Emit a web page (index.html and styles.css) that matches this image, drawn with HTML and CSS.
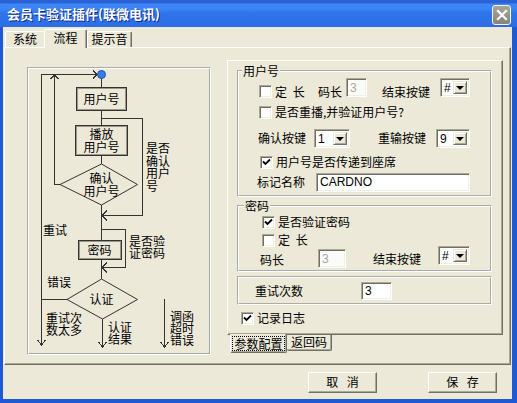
FILE: index.html
```html
<!DOCTYPE html>
<html lang="zh-CN">
<head>
<meta charset="utf-8">
<title>会员卡验证插件</title>
<link rel="stylesheet" href="styles.css">
</head>
<body>
<div class="window">
  <div class="titlebar">
    <span class="title">会员卡验证插件(联微电讯)</span>
    <span class="close"><svg width="12" height="12" viewBox="0 0 12 12"><path d="M2 2 L10 10 M10 2 L2 10" stroke="#fff" stroke-width="2.2" stroke-linecap="square"/></svg></span>
  </div>
  <div class="client">
    <div class="tabs">
      <div class="tab t-sys">系统</div>
      <div class="tab t-flow active">流程</div>
      <div class="tab t-tone">提示音</div>
    </div>
    <div class="page">
      <div class="flow">
        <svg width="180" height="284" viewBox="2 2 180 284">
          <g class="lines">
            <path d="M14.5 278 V7.5 H70"/>
            <path d="M66 3.5 L70 7.5 L66 11.5"/>
            <path d="M27.5 8 V117.5 H33"/>
            <path d="M23.5 12 L27.5 8 L31.5 12"/>
            <path d="M74.5 11 V20"/>
            <rect x="49.5" y="20.5" width="50" height="23"/>
            <rect x="50.5" y="21.5" width="48" height="21" class="inner"/>
            <path d="M74.5 43 V58"/>
            <path d="M74.5 51.5 H115.5 V148.5 H75"/>
            <path d="M80 143.5 L75 148.5 L80 153.5"/>
            <rect x="48.5" y="58.5" width="52" height="30"/>
            <rect x="49.5" y="59.5" width="50" height="28" class="inner"/>
            <path d="M74.5 88 V97"/>
            <polygon points="74.5,97 110.5,117.5 74.5,138 33,117.5"/>
            <path d="M74.5 138 V173"/>
            <path d="M74.5 162.5 H98.5 V200.5 H75"/>
            <path d="M80 195.5 L75 200.5 L80 205.5"/>
            <rect x="51.5" y="173.5" width="43" height="19"/>
            <rect x="52.5" y="174.5" width="41" height="17" class="inner"/>
            <path d="M74.5 192 V212"/>
            <polygon points="74.5,212 110.5,232.5 75.5,252 40,232.5"/>
            <path d="M14.5 232.5 H40"/>
            <path d="M10.5 273 L14.5 278 L18.5 273"/>
            <path d="M75.5 252 V280"/>
            <path d="M71.5 275 L75.5 280 L79.5 275"/>
            <path d="M137.5 232 V280"/>
            <path d="M133.5 275 L137.5 280 L141.5 275"/>
          </g>
          <circle cx="74.5" cy="7.5" r="4" class="dot"/>
        </svg>
        <div class="node n-user">用户号</div>
        <div class="node n-play">播放
用户号</div>
        <div class="node n-confirm">确认
用户号</div>
        <div class="node n-pwd">密码</div>
        <div class="node n-auth">认证</div>
        <div class="note q-confirm">是否确认用户号</div>
        <div class="note q-pwd">是否验证密码</div>
        <div class="note l-retry">重试</div>
        <div class="note l-err">错误</div>
        <div class="note l-many">重试次数太多</div>
        <div class="note l-result">认证结果</div>
        <div class="note l-timeout">调函超时错误</div>
      </div>
      <div class="config">
        <div class="panel">
          <fieldset class="group g-user">
            <legend>用户号</legend>
            <div class="row r1">
              <span class="chk low"></span>
              <span class="lbl w-fix low">定 长</span>
              <span class="lbl w28 low">码长</span>
              <span class="edit disabled w21">3</span>
              <span class="lbl ml15 w58 low">结束按键</span>
              <span class="combo w30"><span class="v">#</span><span class="dd"></span></span>
            </div>
            <div class="row r2">
              <span class="chk"></span>
              <span class="lbl ml3">是否重播,并验证用户号?</span>
            </div>
            <div class="row r3">
              <span class="lbl ml19 w56">确认按键</span>
              <span class="combo w36"><span class="v">1</span><span class="dd"></span></span>
              <span class="lbl ml28 w58">重输按键</span>
              <span class="combo w34"><span class="v">9</span><span class="dd"></span></span>
            </div>
            <div class="row r4">
              <span class="chk on ml21"><svg width="9" height="9" viewBox="0 0 9 9"><path d="M1 3.5 L3.5 6 L8 1.5" class="tick"/></svg></span>
              <span class="lbl ml3">用户号是否传递到座席</span>
            </div>
            <div class="row r5">
              <span class="lbl ml18 w59">标记名称</span>
              <span class="edit w154">CARDNO</span>
            </div>
          </fieldset>
          <fieldset class="group g-pwd">
            <legend>密码</legend>
            <div class="row p1">
              <span class="chk on ml23"><svg width="9" height="9" viewBox="0 0 9 9"><path d="M1 3.5 L3.5 6 L8 1.5" class="tick"/></svg></span>
              <span class="lbl ml3">是否验证密码</span>
            </div>
            <div class="row p2">
              <span class="chk ml23"></span>
              <span class="lbl ml3 spaced">定 长</span>
            </div>
            <div class="row p3">
              <span class="lbl ml21 w58 drop">码长</span>
              <span class="edit disabled w28">3</span>
              <span class="lbl ml27 w65">结束按键</span>
              <span class="combo w32 lift"><span class="v">#</span><span class="dd"></span></span>
            </div>
          </fieldset>
          <fieldset class="group g-retry">
            <div class="row q1">
              <span class="lbl ml16 w106">重试次数</span>
              <span class="edit w31 short">3</span>
            </div>
          </fieldset>
          <div class="row logrow">
            <span class="chk on ml4"><svg width="9" height="9" viewBox="0 0 9 9"><path d="M1 3.5 L3.5 6 L8 1.5" class="tick"/></svg></span>
            <span class="lbl ml3">记录日志</span>
          </div>
        </div>
        <div class="btabs">
          <div class="btab active"><span class="focus">参数配置</span></div>
          <div class="btab">返回码</div>
        </div>
      </div>
    </div>
    <div class="buttons">
      <button class="btn">取 消</button>
      <button class="btn">保 存</button>
    </div>
  </div>
</div>
</body>
</html>
```

FILE: styles.css
```css
* { box-sizing: border-box; }
html, body { margin: 0; padding: 0; }
body {
  width: 517px;
  height: 403px;
  overflow: hidden;
  background: #fff;
  color: #000;
  font: 12px/14px "Liberation Sans", "Noto Sans CJK SC", sans-serif;
}

.window {
  width: 517px;
  height: 403px;
  display: flex;
  flex-direction: column;
  background: #1f5ad6;
}

.titlebar {
  height: 27px;
  flex: none;
  display: flex;
  align-items: center;
  justify-content: space-between;
  padding: 0 6px 0 7px;
  background: linear-gradient(to bottom, #2a62d6 0, #2a62d6 3px, #3c86f6 4px, #3a84f5 9px, #2f74ea 13px, #2b6de6 27px);
}
.title {
  color: #fff;
  font-family: "Noto Sans CJK SC", sans-serif;
  font-weight: bold;
  font-size: 13px;
  line-height: 16px;
  text-shadow: 1px 1px #0b2a8a;
  margin-top: 1px;
}
.close {
  width: 19px;
  height: 20px;
  border: 1px solid #f4f4f0;
  border-radius: 3px;
  background: linear-gradient(to bottom, #a7a59c, #86847b);
  display: flex;
  align-items: center;
  justify-content: center;
  margin-top: 2px;
}

.client {
  flex: 1;
  margin: 0 5px 4px 3px;
  padding: 2px 1px 0 1px;
  background: #ece9d8;
  display: flex;
  flex-direction: column;
}

/* top tabs */
.tabs {
  height: 18px;
  flex: none;
  display: flex;
  align-items: flex-end;
  padding-left: 1px;
}
.tab {
  height: 16px;
  line-height: 14px;
  text-align: center;
  font-family: "Noto Sans CJK SC", sans-serif;
  background: #ece9d8;
  border-top: 1px solid #fff;
  border-left: 1px solid #fff;
  border-right: 1px solid #716f64;
  box-shadow: inset -1px 0 #aca899;
  border-radius: 2px 2px 0 0;
}
.t-sys { width: 39px; border-right: none; box-shadow: none; }
.t-flow { width: 43px; }
.t-tone { width: 45px; }
.tab.active {
  height: 19px;
  margin-bottom: -1px;
  position: relative;
  z-index: 1;
  line-height: 16px;
}

.page {
  height: 318px;
  flex: none;
  border-top: 1px solid #fff;
  border-left: 1px solid #fff;
  border-right: 1px solid #716f64;
  border-bottom: 1px solid #716f64;
  box-shadow: inset -1px -1px #aca899;
  display: flex;
  align-items: flex-start;
}

/* flowchart */
.flow {
  position: relative;
  width: 184px;
  height: 288px;
  margin: 19px 0 0 22px;
  border: 2px groove #fff;
  flex: none;
}
.flow svg { display: block; }
.lines path, .lines rect, .lines polygon {
  fill: none;
  stroke: #333;
  stroke-width: 1;
  shape-rendering: crispEdges;
}
.lines polygon { shape-rendering: auto; }
.lines rect.inner { stroke: #9a978a; }
.dot { fill: #3a7de8; stroke: #1d4fb8; stroke-width: 1; }

.node, .note {
  position: absolute;
  font-family: "Noto Sans CJK SC", sans-serif;
  font-size: 12px;
  line-height: 12px;
}
.node { text-align: center; width: 61px; left: 42px; white-space: pre-line; }
.n-user { top: 24px; }
.n-play { top: 58px; line-height: 13px; }
.n-confirm { top: 103px; line-height: 12.5px; }
.n-pwd { top: 175px; left: 40px; }
.n-auth { top: 224px; left: 42px; }

.note { width: 24px; word-break: break-all; }
.q-confirm { left: 117px; top: 73px; line-height: 12.5px; }
.q-pwd { left: 100px; top: 166px; width: 36px; line-height: 11.5px; }
.l-retry { left: 14px; top: 155px; width: 30px; }
.l-err { left: 18px; top: 207px; width: 30px; }
.l-many { left: 17px; top: 243px; width: 36px; line-height: 11.5px; }
.l-result { left: 79px; top: 252px; }
.l-timeout { left: 141px; top: 241px; }

/* config panel */
.config {
  margin: 12px 0 0 16px;
  width: 276px;
  flex: none;
}
.panel {
  height: 275px;
  padding: 3px 0 0 9px;
  border-top: 1px solid #fff;
  border-left: 1px solid #fff;
  border-right: 1px solid #716f64;
  border-bottom: 1px solid #716f64;
  box-shadow: inset -1px -1px #aca899;
}
.group {
  width: 255px;
  margin: 0;
  padding: 0;
  min-inline-size: 0;
  border: 2px groove #fff;
}
.group legend {
  padding: 0 1px;
  margin-left: 3px;
  line-height: 14px;
  height: 14px;
  font-family: "Noto Sans CJK SC", sans-serif;
}
.g-user { padding-bottom: 3px; }
.g-pwd { margin-top: 2px; padding-bottom: 2px; }
.g-pwd legend { margin-left: 5px; }
.g-retry { margin-top: 4px; padding: 4px 0 3px; }

.row { display: flex; align-items: center; }
.r1 { height: 20px; align-items: flex-start; }
.r1 .low { align-self: flex-end; }
.r1 .chk { margin-left: 20px; }
.r2 { height: 18px; margin-top: 5px; }
.r2 .chk { margin-left: 20px; }
.r3 { height: 20px; margin-top: 7px; }
.r4 { height: 18px; margin-top: 5px; }
.r5 { height: 20px; margin-top: 1px; }
.p1, .p2 { height: 18px; }
.p3 { height: 19px; }
.q1 { height: 18px; }
.logrow { height: 18px; margin-top: 4px; }

.lbl {
  flex: none;
  white-space: nowrap;
  line-height: 12px;
  font-family: "Noto Sans CJK SC", sans-serif;
}
.w-fix { width: 43px; margin-left: 3px; word-spacing: 3px; }
.spaced { word-spacing: 3px; }
.ml3 { margin-left: 3px; }
.ml4 { margin-left: 4px; }
.ml15 { margin-left: 15px; }
.ml16 { margin-left: 16px; }
.ml18 { margin-left: 18px; }
.ml19 { margin-left: 19px; }
.ml21 { margin-left: 21px; }
.ml23 { margin-left: 23px; }
.ml27 { margin-left: 27px; }
.ml28 { margin-left: 28px; }
.w21 { width: 21px; }
.w28 { width: 28px; }
.w30 { width: 30px; }
.w31 { width: 31px; }
.w32 { width: 32px; }
.w34 { width: 34px; }
.w36 { width: 36px; }
.w56 { width: 56px; }
.w58 { width: 58px; }
.w59 { width: 59px; }
.w65 { width: 65px; }
.w106 { width: 106px; }
.w154 { width: 154px; }
.drop { margin-top: 3px; }

/* checkbox */
.chk {
  width: 13px;
  height: 13px;
  flex: none;
  background: #fff;
  border: 1px solid;
  border-color: #aca899 #fff #fff #aca899;
  box-shadow: inset 1px 1px #716f64, inset -1px -1px #f1efe2;
  display: flex;
  align-items: center;
  justify-content: center;
}
.tick { fill: none; stroke: #000; stroke-width: 1.8; }

/* edit box */
.edit {
  height: 19px;
  flex: none;
  display: flex;
  align-items: center;
  padding: 0 3px;
  background: #fff;
  border: 1px solid;
  border-color: #aca899 #fff #fff #aca899;
  box-shadow: inset 1px 1px #716f64, inset -1px -1px #f1efe2;
  font-family: "Liberation Sans", sans-serif;
  font-size: 12px;
  line-height: 12px;
}
.edit.disabled { background: #fbfbf9; color: #aca899; }
.edit.short { height: 18px; }

/* combo box */
.combo {
  height: 19px;
  flex: none;
  display: flex;
  background: #fff;
  border: 1px solid;
  border-color: #aca899 #fff #fff #aca899;
  box-shadow: inset 1px 1px #716f64, inset -1px -1px #f1efe2;
  padding: 2px;
}
.combo .v {
  flex: 1;
  padding-left: 1px;
  line-height: 14px;
  font-family: "Liberation Sans", sans-serif;
}
.combo .dd {
  width: 14px;
  flex: none;
  background: #ece9d8;
  border-top: 1px solid #ece9d8;
  border-left: 1px solid #ece9d8;
  border-right: 1px solid #716f64;
  border-bottom: 1px solid #716f64;
  box-shadow: inset 1px 1px #fff, inset -1px -1px #aca899;
  display: flex;
  align-items: center;
  justify-content: center;
}
.combo .dd::after {
  content: "";
  width: 0;
  height: 0;
  border-left: 4px solid transparent;
  border-right: 4px solid transparent;
  border-top: 4px solid #000;
  margin-top: 1px;
}
.lift { margin-bottom: 6px; }

/* bottom tabs of config panel */
.btabs {
  display: flex;
  align-items: flex-start;
  padding-left: 3px;
}
.btab {
  height: 16px;
  width: 45px;
  text-align: center;
  line-height: 14px;
  font-family: "Noto Sans CJK SC", sans-serif;
  background: #ece9d8;
  border-right: 1px solid #716f64;
  border-bottom: 1px solid #716f64;
  box-shadow: inset -1px -1px #aca899;
  border-radius: 0 0 2px 2px;
}
.btab.active {
  width: 57px;
  height: 19px;
  margin-top: -1px;
  position: relative;
  z-index: 1;
  border-left: 1px solid #fff;
  padding-top: 2px;
}
.focus {
  display: inline-block;
  border: 1px dotted #000;
  padding: 0 1px;
  line-height: 13px;
}

/* dialog buttons */
.buttons {
  flex: 1;
  display: flex;
  justify-content: flex-end;
  align-items: flex-start;
  gap: 51px;
  padding: 7px 14px 0 0;
}
.btn {
  width: 69px;
  height: 21px;
  padding: 0;
  margin: 0;
  background: #ece9d8;
  border-top: 1px solid #fff;
  border-left: 1px solid #fff;
  border-right: 1px solid #716f64;
  border-bottom: 1px solid #716f64;
  box-shadow: inset -1px -1px #aca899;
  font: 12px/14px "Liberation Sans", "Noto Sans CJK SC", sans-serif;
  word-spacing: 5px;
  color: #000;
}
```
